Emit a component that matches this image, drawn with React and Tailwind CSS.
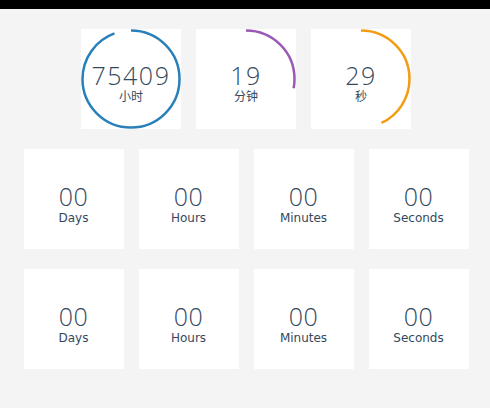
import React from "react";

const C = 2 * Math.PI * 48.5;

function Ring({ value, label, color, frac }) {
  return (
    <div className="relative w-[100px] h-[100px] bg-white flex flex-col items-center pt-[33px]">
      <svg className="absolute inset-0" width="100" height="100" viewBox="0 0 100 100">
        <circle
          cx="50"
          cy="50"
          r="48.5"
          fill="none"
          stroke={color}
          strokeWidth="2.5"
          strokeDasharray={`${frac * C} ${C}`}
          transform="rotate(-90 50 50)"
        />
      </svg>
      <div className="relative text-[25px] leading-[27px] font-light tracking-[1.5px] text-[#34495e] font-['Open_Sans',sans-serif]">
        {value}
      </div>
      <div className="relative text-[12px] leading-[14px] mt-[1px] text-[#34495e] font-['DejaVu_Sans','Noto_Sans_CJK_SC',sans-serif]">
        {label}
      </div>
    </div>
  );
}

function Box({ label }) {
  return (
    <div className="w-[100px] h-[100px] bg-white flex flex-col items-center pt-[34px]">
      <div className="text-[25px] leading-[27px] font-light tracking-[0.5px] text-[#34495e] font-['Open_Sans',sans-serif]">
        00
      </div>
      <div className="text-[12px] leading-[14px] mt-[1px] text-[#34495e] font-['DejaVu_Sans',sans-serif]">
        {label}
      </div>
    </div>
  );
}

export default function App() {
  const labels = ["Days", "Hours", "Minutes", "Seconds"];
  return (
    <div className="w-[490px] h-[408px] bg-[#f4f4f4] overflow-hidden">
      <div className="h-[9px] bg-black" />
      <div className="pl-[2px] pt-[20px] flex flex-col gap-[20px]">
        <div className="flex justify-center gap-[15px]">
          <Ring value="75409" label="小时" color="#2980b9" frac={0.943} />
          <Ring value="19" label="分钟" color="#9b59b6" frac={0.28} />
          <Ring value="29" label="秒" color="#f39c12" frac={0.43} />
        </div>
        <div className="flex justify-center gap-[15px]">
          {labels.map((l) => (
            <Box key={l} label={l} />
          ))}
        </div>
        <div className="flex justify-center gap-[15px]">
          {labels.map((l) => (
            <Box key={l} label={l} />
          ))}
        </div>
      </div>
    </div>
  );
}
